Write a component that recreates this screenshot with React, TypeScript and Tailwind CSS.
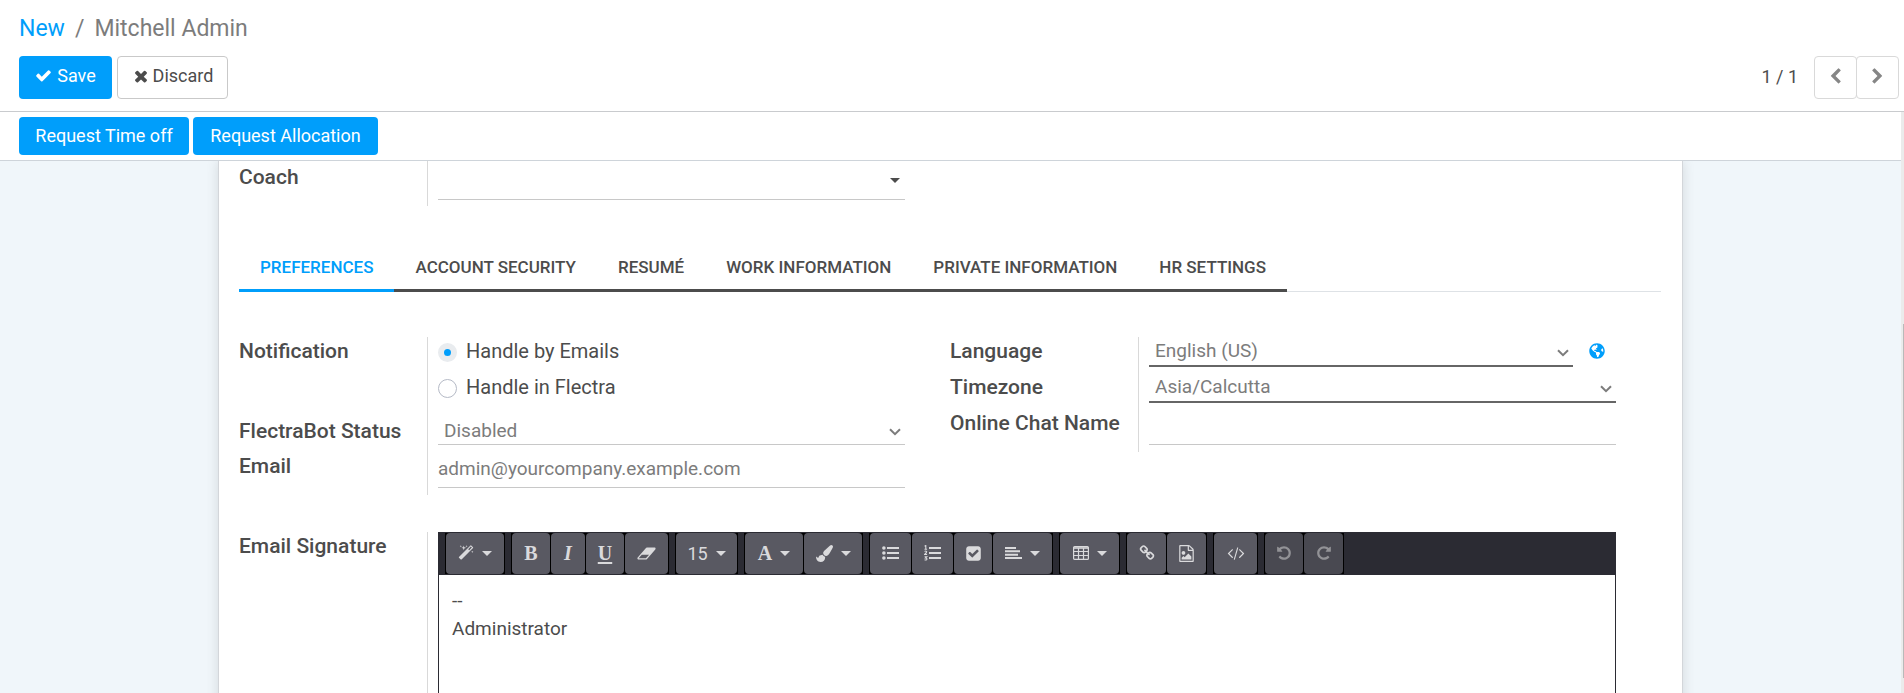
import { useState } from "react";
import type { ReactNode } from "react";
import { FaGlobeAmericas } from "react-icons/fa";

const PATHS = {
  check:
    "M1671 566q0 40-28 68l-724 724-136 136q-28 28-68 28t-68-28l-136-136-362-362q-28-28-28-68t28-68l136-136q28-28 68-28t68 28l294 295 656-657q28-28 68-28t68 28l136 136q28 28 28 68z",
  times:
    "M1490 1322q0 40-28 68l-136 136q-28 28-68 28t-68-28l-294-294-294 294q-28 28-68 28t-68-28l-136-136q-28-28-28-68t28-68l294-294-294-294q-28-28-28-68t28-68l136-136q28-28 68-28t68 28l294 294 294-294q28-28 68-28t68 28l136 136q28 28 28 68t-28 68l-294 294 294 294q28 28 28 68z",
  left: "M1427 301l-531 531 531 531q19 19 19 45t-19 45l-166 166q-19 19-45 19t-45-19l-742-742q-19-19-19-45t19-45l742-742q19-19 45-19t45 19l166 166q19 19 19 45t-19 45z",
  right:
    "M1363 877l-742 742q-19 19-45 19t-45-19l-166-166q-19-19-19-45t19-45l531-531-531-531q-19-19-19-45t19-45l166-166q19-19 45-19t45 19l742 742q19 19 19 45t-19 45z",
  magic:
    "M1254 581l293-293-107-107-293 293zm447-293q0 27-18 45l-1286 1286q-18 18-45 18t-45-18l-198-198q-18-18-18-45t18-45l1286-1286q18-18 45-18t45 18l198 198q18 18 18 45zm-1351-190l98 30-98 30-30 98-30-98-98-30 98-30 30-98zm350 162l196 60-196 60-60 196-60-196-196-60 196-60 60-196zm930 478l98 30-98 30-30 98-30-98-98-30 98-30 30-98zm-640-640l98 30-98 30-30 98-30-98-98-30 98-30 30-98z",
  eraser:
    "M832 1408l336-384h-768l-336 384h768zm1013-1077q15 34 9.500 71.500t-30.500 65.500l-896 1024q-38 44-96 44h-768q-38 0-69.500-20.500t-47.500-54.500q-15-34-9.500-71.500t30.500-65.500l896-1024q38-44 96-44h768q38 0 69.500 20.500t47.500 54.500z",
  brush:
    "M1615 0q70 0 122.500 46.500t52.500 116.500q0 63-45 151-332 629-465 752-97 91-218 91-126 0-216.500-92.500t-90.500-219.500q0-128 92-212l638-579q59-54 130-54zm-909 1034q39 76 106.500 130t150.500 76l1 71q4 213-129.500 347t-348.500 134q-123 0-218-46.500t-152.500-127.500-86.500-183-29-220q7 5 41 30t62 44.500 59 36.500 46 17q41 0 55-37 25-66 57.500-112.500t69.500-76 88-47.500 103-25.500 125-10.500z",
  checkSquare:
    "M813 1299l614-614q19-19 19-45t-19-45l-102-102q-19-19-45-19t-45 19l-467 467-211-211q-19-19-45-19t-45 19l-102 102q-19 19-19 45t19 45l358 358q19 19 45 19t45-19zm851-883v960q0 119-84.500 203.500t-203.500 84.500h-960q-119 0-203.500-84.500t-84.500-203.500v-960q0-119 84.500-203.500t203.500-84.500h960q119 0 203.500 84.500t84.500 203.500z",
  link: "M1520 1216q0-40-28-68l-208-208q-28-28-68-28-42 0-72 32 3 3 19 18.500t21.500 21.500 15 19 13 25.500 3.500 27.500q0 40-28 68t-68 28q-15 0-27.500-3.500t-25.500-13-19-15-21.500-21.500-18.500-19q-33 31-33 73 0 40 28 68l206 207q27 27 68 27 40 0 68-26l147-146q28-28 28-67zm-703-705q0-40-28-68l-206-207q-28-28-68-28-39 0-68 27l-147 146q-28 28-28 67 0 40 28 68l208 208q27 27 68 27 42 0 72-31-3-3-19-18.500t-21.500-21.500-15-19-13-25.500-3.500-27.500q0-40 28-68t68-28q15 0 27.500 3.500t25.500 13 19 15 21.500 21.500 18.500 19q33-31 33-73zm895 705q0 120-85 203l-147 146q-83 83-203 83-121 0-204-85l-206-207q-83-83-83-203 0-123 88-209l-88-88q-86 88-208 88-120 0-204-84l-208-208q-84-84-84-204t85-203l147-146q83-83 203-83 121 0 204 85l206 207q83 83 83 203 0 123-88 209l88 88q86-88 208-88 120 0 204 84l208 208q84 84 84 204z",
  image:
    "M1596 380q28 28 48 76t20 88v1152q0 40-28 68t-68 28h-1344q-40 0-68-28t-28-68v-1600q0-40 28-68t68-28h896q40 0 88 20t76 48zm-444-244v376h376q-10-29-22-41l-313-313q-12-12-41-22zm384 1528v-1024h-416q-40 0-68-28t-28-68v-416h-768v1536h1280zm-128-448v320h-1024v-192l192-192 128 128 384-384zm-832-192q-80 0-136-56t-56-136 56-136 136-56 136 56 56 136-56 136-136 56z",
  code: "M553 1399l-50 50q-10 10-23 10t-23-10l-466-466q-10-10-10-23t10-23l466-466q10-10 23-10t23 10l50 50q10 10 10 23t-10 23l-393 393 393 393q10 10 10 23t-10 23zm591-1067l-373 1291q-4 13-15.500 19.500t-23.500 2.500l-62-17q-13-4-19.500-15.500t-2.500-24.500l373-1291q4-13 15.500-19.500t23.500-2.500l62 17q13 4 19.500 15.500t2.500 24.500zm657 651l-466 466q-10 10-23 10t-23-10l-50-50q-10-10-10-23t10-23l393-393-393-393q-10-10-10-23t10-23l50-50q10-10 23-10t23 10l466 466q10 10 10 23t-10 23z",
  undo: "M1664 896q0 156-61 298t-164 245-245 164-298 61q-172 0-327-72.500t-264-204.500q-7-10-6.500-22.500t8.500-20.500l137-138q10-9 25-9 16 2 23 12 73 95 179 147t225 52q104 0 198.500-40.500t163.500-109.500 109.500-163.500 40.500-198.500-40.500-198.500-109.500-163.500-163.500-109.500-198.500-40.500q-98 0-188 35.500t-160 101.500l137 138q31 30 14 69-17 40-59 40h-448q-26 0-45-19t-19-45v-448q0-42 40-59 39-17 69 14l130 129q107-101 244.500-156.500t284.500-55.500q156 0 298 61t245 164 164 245 61 298z",
};

function Glyph({ name, className = "size-4" }: { name: keyof typeof PATHS; className?: string }) {
  return (
    <svg viewBox="0 0 1792 1792" fill="currentColor" className={`shrink-0 overflow-visible ${className}`} aria-hidden="true">
      <path d={PATHS[name]} />
    </svg>
  );
}

function Caret() {
  return (
    <svg viewBox="0 0 10 5" fill="currentColor" className="h-[5px] w-[10px] shrink-0" aria-hidden="true">
      <path d="M0 0h10L5 5z" />
    </svg>
  );
}

function Chevron({ className }: { className: string }) {
  return (
    <svg viewBox="0 0 12 8" fill="none" stroke="#7c7c7c" strokeWidth="2" className={`pointer-events-none absolute h-2 w-3 ${className}`} aria-hidden="true">
      <path d="M1 1.200l5 5 5-5" />
    </svg>
  );
}

function ListUl() {
  return (
    <svg viewBox="0 0 17 14" fill="currentColor" className="h-[14px] w-[17px]" aria-hidden="true">
      <circle cx="1.900" cy="2" r="1.800" />
      <circle cx="1.900" cy="7" r="1.800" />
      <circle cx="1.900" cy="12" r="1.800" />
      <path d="M5 1h12v2H5zM5 6h12v2H5zM5 11h12v2H5z" />
    </svg>
  );
}

function ListOl() {
  return (
    <svg viewBox="0 0 17 16" fill="currentColor" className="h-4 w-[17px]" aria-hidden="true">
      <path d="M5 2h12v2H5zM5 7h12v2H5zM5 12h12v2H5z" />
      <path
        d="M.6 1.200L1.800.5v3.600M.5 4.200h2.600M.6 6.500q1.200-.9 2 0 .4.900-2 3h2.500M.6 11.700h2.200l-1.300 1.300q1.600 0 1.400 1.200-.6 1.300-2.300.500"
        fill="none"
        stroke="currentColor"
        strokeWidth="1.100"
      />
    </svg>
  );
}

function AlignLeft() {
  return (
    <svg viewBox="0 0 17 14" fill="currentColor" className="h-[14px] w-[17px]" aria-hidden="true">
      <path d="M0 1h11v2H0zM0 4.300h15v2H0zM0 7.700h13v2H0zM0 11h17v2H0z" />
    </svg>
  );
}

function TableIcon() {
  return (
    <svg viewBox="0 0 16 14" fill="none" stroke="currentColor" className="h-[14px] w-4" aria-hidden="true">
      <rect x=".6" y=".6" width="14.800" height="12.800" rx="1" strokeWidth="1.200" />
      <path d="M1 2h14" strokeWidth="1.600" />
      <path d="M1 5.500h14M1 9.500h14M5.500 2v11M10.500 2v11" strokeWidth="1.200" />
    </svg>
  );
}

type Tool = { label: string; icon: ReactNode; width: string; caret?: boolean; disabled?: boolean };

const SERIF = "font-['Liberation_Serif',serif] text-[20px]";

const TOOLS: Tool[][] = [
  [{ label: "Style", icon: <Glyph name="magic" />, width: "w-[58px]", caret: true }],
  [
    { label: "Bold", icon: <span className={`${SERIF} font-bold`}>B</span>, width: "w-[38px]" },
    { label: "Italic", icon: <span className={`${SERIF} font-bold italic`}>I</span>, width: "w-[34px]" },
    { label: "Underline", icon: <span className={`${SERIF} font-bold underline underline-offset-2`}>U</span>, width: "w-[38px]" },
    { label: "Remove font style", icon: <Glyph name="eraser" className="size-[17px]" />, width: "w-[43px]" },
  ],
  [{ label: "Font size", icon: <span className="text-[18px]">15</span>, width: "w-[61px]", caret: true }],
  [
    { label: "Font color", icon: <span className={`${SERIF} font-bold`}>A</span>, width: "w-[58px]", caret: true },
    { label: "Background color", icon: <Glyph name="brush" className="size-[17px]" />, width: "w-[58px]", caret: true },
  ],
  [
    { label: "Unordered list", icon: <ListUl />, width: "w-[41px]" },
    { label: "Ordered list", icon: <ListOl />, width: "w-[41px]" },
    { label: "Checklist", icon: <Glyph name="checkSquare" className="size-[17px]" />, width: "w-[38px]" },
    { label: "Paragraph", icon: <AlignLeft />, width: "w-[59px]", caret: true },
  ],
  [{ label: "Table", icon: <TableIcon />, width: "w-[59px]", caret: true }],
  [
    { label: "Link", icon: <Glyph name="link" />, width: "w-[39px]" },
    { label: "Picture", icon: <Glyph name="image" className="size-[17px]" />, width: "w-[39px]" },
  ],
  [{ label: "Code view", icon: <Glyph name="code" />, width: "w-[43px]" }],
  [
    { label: "Undo", icon: <Glyph name="undo" />, width: "w-[38px]", disabled: true },
    { label: "Redo", icon: <Glyph name="undo" className="size-4 -scale-x-100" />, width: "w-[39px]", disabled: true },
  ],
];

function Toolbar() {
  return (
    <div className="flex flex-wrap gap-[6px] bg-[#2b2b33] px-[6px] py-px" role="toolbar" aria-label="Formatting">
      {TOOLS.map((group, i) => (
        <div key={i} className="flex gap-px bg-black px-px">
          {group.map((t) => (
            <button
              key={t.label}
              type="button"
              aria-label={t.label}
              disabled={t.disabled}
              className={`flex h-[41px] items-center justify-center gap-2 rounded-[4px] pb-px ${t.width} ${
                t.disabled ? "bg-[#494951] text-[#929296]" : "bg-[#595962] text-[#dadadc]"
              }`}
            >
              {t.icon}
              {t.caret && <Caret />}
            </button>
          ))}
        </div>
      ))}
    </div>
  );
}

function Row({ label, id, className = "min-h-[43px]", children }: { label: string; id?: string; className?: string; children?: ReactNode }) {
  return (
    <div className={`flex ${className}`}>
      <div className="w-[189px] shrink-0 border-r border-[#d9d9d9] text-[21px] leading-7 font-medium">
        {id ? <label htmlFor={id}>{label}</label> : <span>{label}</span>}
      </div>
      <div className="min-w-0 flex-1 pl-[10px]">{children}</div>
    </div>
  );
}

const LINE_INPUT = "block h-9 w-full border-b border-[#c8c8c8] bg-transparent pb-[2px] text-[19px] text-[#7c7c7c] outline-none";
const SELECT = "block w-full appearance-none bg-transparent pl-[6px] text-[19px] text-[#7c7c7c] outline-none";

const TABS = ["Preferences", "Account Security", "Resumé", "Work Information", "Private Information", "HR Settings"];

export default function App() {
  const [tab, setTab] = useState(TABS[0]);
  const [notify, setNotify] = useState("email");
  const radios = [
    { id: "email", label: "Handle by Emails" },
    { id: "inbox", label: "Handle in Flectra" },
  ];
  return (
    <div className="flex h-screen flex-col overflow-hidden bg-white font-[Roboto,sans-serif] text-[18px] text-[#4c4c4c]">
      <header className="shrink-0 border-b border-[#c9cbce] pt-[14px] pr-[5px] pb-3 pl-[19px]">
        <nav className="flex h-[30px] items-center gap-[10px] text-[23px] text-[#7c7c7c]" aria-label="Breadcrumb">
          <a href="#new" className="text-[#009efb]">New</a>
          <span>/</span>
          <span>Mitchell Admin</span>
        </nav>
        <div className="mt-3 flex items-center justify-between">
          <div className="flex gap-[5px]">
            <button type="button" className="flex h-[43px] w-[93px] items-center justify-center gap-[5px] rounded-[4px] bg-[#009efb] pb-1 text-white">
              <Glyph name="check" className="size-[17px]" />
              Save
            </button>
            <button type="button" className="flex h-[43px] w-[111px] items-center justify-center gap-[3px] rounded-[4px] border border-[#c9c9c9] pb-1">
              <Glyph name="times" className="size-[18px]" />
              Discard
            </button>
          </div>
          <div className="flex items-center">
            <span className="mr-4 pb-[3px]">1 / 1</span>
            <button type="button" aria-label="Previous" className="flex h-[43px] w-[43px] items-center justify-center rounded-[4px] border border-[#d9d9d9] pb-[2px] text-[#868686]">
              <Glyph name="left" className="size-[17px]" />
            </button>
            <button type="button" aria-label="Next" className="-ml-px flex h-[43px] w-[43px] items-center justify-center rounded-[4px] border border-[#d9d9d9] pb-[2px] text-[#868686]">
              <Glyph name="right" className="size-[17px]" />
            </button>
          </div>
        </div>
      </header>

      <div className="relative flex min-h-0 flex-1 flex-col pr-[3px]">
        <div className="flex shrink-0 gap-1 border-b border-[#ced4da] py-[5px] pl-[19px]">
          <button type="button" className="h-[38px] w-[170px] rounded-[4px] bg-[#009efb] pb-[2px] text-white">Request Time off</button>
          <button type="button" className="h-[38px] w-[185px] rounded-[4px] bg-[#009efb] pb-[2px] text-white">Request Allocation</button>
        </div>

        <main className="min-h-0 flex-1 overflow-hidden bg-[#f0f6fa] px-[218px]">
          <section className="min-h-full border-x border-[#d3d6da] bg-white pr-[21px] pl-5 shadow-[0_0_12px_rgba(0,0,0,0.12)]">
            <div className="grid grid-cols-2">
              <div className="pr-[45px]">
                <Row label="Coach" id="coach" className="min-h-[45px] *:pt-[2px]">
                  <div className="relative pt-px">
                    <input id="coach" className={LINE_INPUT} />
                    <span className="pointer-events-none absolute top-[15px] right-[5px]">
                      <Caret />
                    </span>
                  </div>
                </Row>
              </div>
            </div>

            <div className="mt-[37px] flex border-b border-[#dee2e6]" role="tablist">
              {TABS.map((t) => (
                <button
                  key={t}
                  type="button"
                  role="tab"
                  aria-selected={t === tab}
                  onClick={() => setTab(t)}
                  className={`-mb-px h-[49px] border-b-[3px] px-[21px] pt-[3px] text-[17px] font-medium uppercase ${
                    t === tab ? "border-[#009efb] text-[#009efb]" : "border-[#4c4c4c]"
                  }`}
                >
                  {t}
                </button>
              ))}
            </div>

            <div className="mt-[45px] grid grid-cols-2">
              <div className="pr-[45px]">
                <Row label="Notification" className="min-h-20">
                  <div role="radiogroup" aria-label="Notification">
                    {radios.map((r) => (
                      <label key={r.id} className="flex h-9 items-start gap-[9px] text-[20px] leading-7">
                        <input
                          type="radio"
                          name="notification"
                          checked={notify === r.id}
                          onChange={() => setNotify(r.id)}
                          className="mt-[6px] size-[19px] appearance-none rounded-full border border-[#b5bac6] checked:border-[6px] checked:border-[#e9ecef] checked:bg-[#009efb]"
                        />
                        {r.label}
                      </label>
                    ))}
                  </div>
                </Row>
                <Row label="FlectraBot Status" id="bot" className="min-h-[35px]">
                  <div className="relative">
                    <select id="bot" className={`${SELECT} h-7 border-b border-[#c8c8c8]`}>
                      <option>Disabled</option>
                    </select>
                    <Chevron className="top-[11px] right-1" />
                  </div>
                </Row>
                <Row label="Email" id="email-input">
                  <input id="email-input" type="email" defaultValue="admin@yourcompany.example.com" className={LINE_INPUT} />
                </Row>
              </div>
              <div className="pr-[45px]">
                <Row label="Language" id="lang" className="min-h-9">
                  <div className="flex">
                    <div className="relative flex-1">
                      <select id="lang" className={`${SELECT} h-[30px] border-b-2 border-[#666]`}>
                        <option>English (US)</option>
                      </select>
                      <Chevron className="top-3 right-1" />
                    </div>
                    <button type="button" aria-label="Translate" className="mr-[11px] ml-4 h-7 text-[#009efb]">
                      <FaGlobeAmericas className="size-4" />
                    </button>
                  </div>
                </Row>
                <Row label="Timezone" id="tz" className="min-h-9">
                  <div className="relative">
                    <select id="tz" className={`${SELECT} h-[30px] border-b-2 border-[#666]`}>
                      <option>Asia/Calcutta</option>
                    </select>
                    <Chevron className="top-3 right-1" />
                  </div>
                </Row>
                <Row label="Online Chat Name" id="chat">
                  <input id="chat" className={LINE_INPUT} />
                </Row>
              </div>
            </div>

            <div className="mt-[37px] pr-[45px]">
              <Row label="Email Signature" className="min-h-60">
                <div className="border border-t-0 border-[#2b2b33]">
                  <Toolbar />
                  <div
                    role="textbox"
                    aria-label="Email Signature"
                    contentEditable
                    suppressContentEditableWarning
                    className="min-h-48 px-[13px] py-3 text-[19px] leading-7 outline-none"
                  >
                    <p>--</p>
                    <p>Administrator</p>
                  </div>
                </div>
              </Row>
            </div>
          </section>
        </main>
        <div className="absolute inset-y-0 right-0 w-[3px] bg-[#ebebeb] pt-[212px]" aria-hidden="true">
          <div className="ml-[2px] h-[354px] bg-[#b9b9b9]" />
        </div>
      </div>
    </div>
  );
}
